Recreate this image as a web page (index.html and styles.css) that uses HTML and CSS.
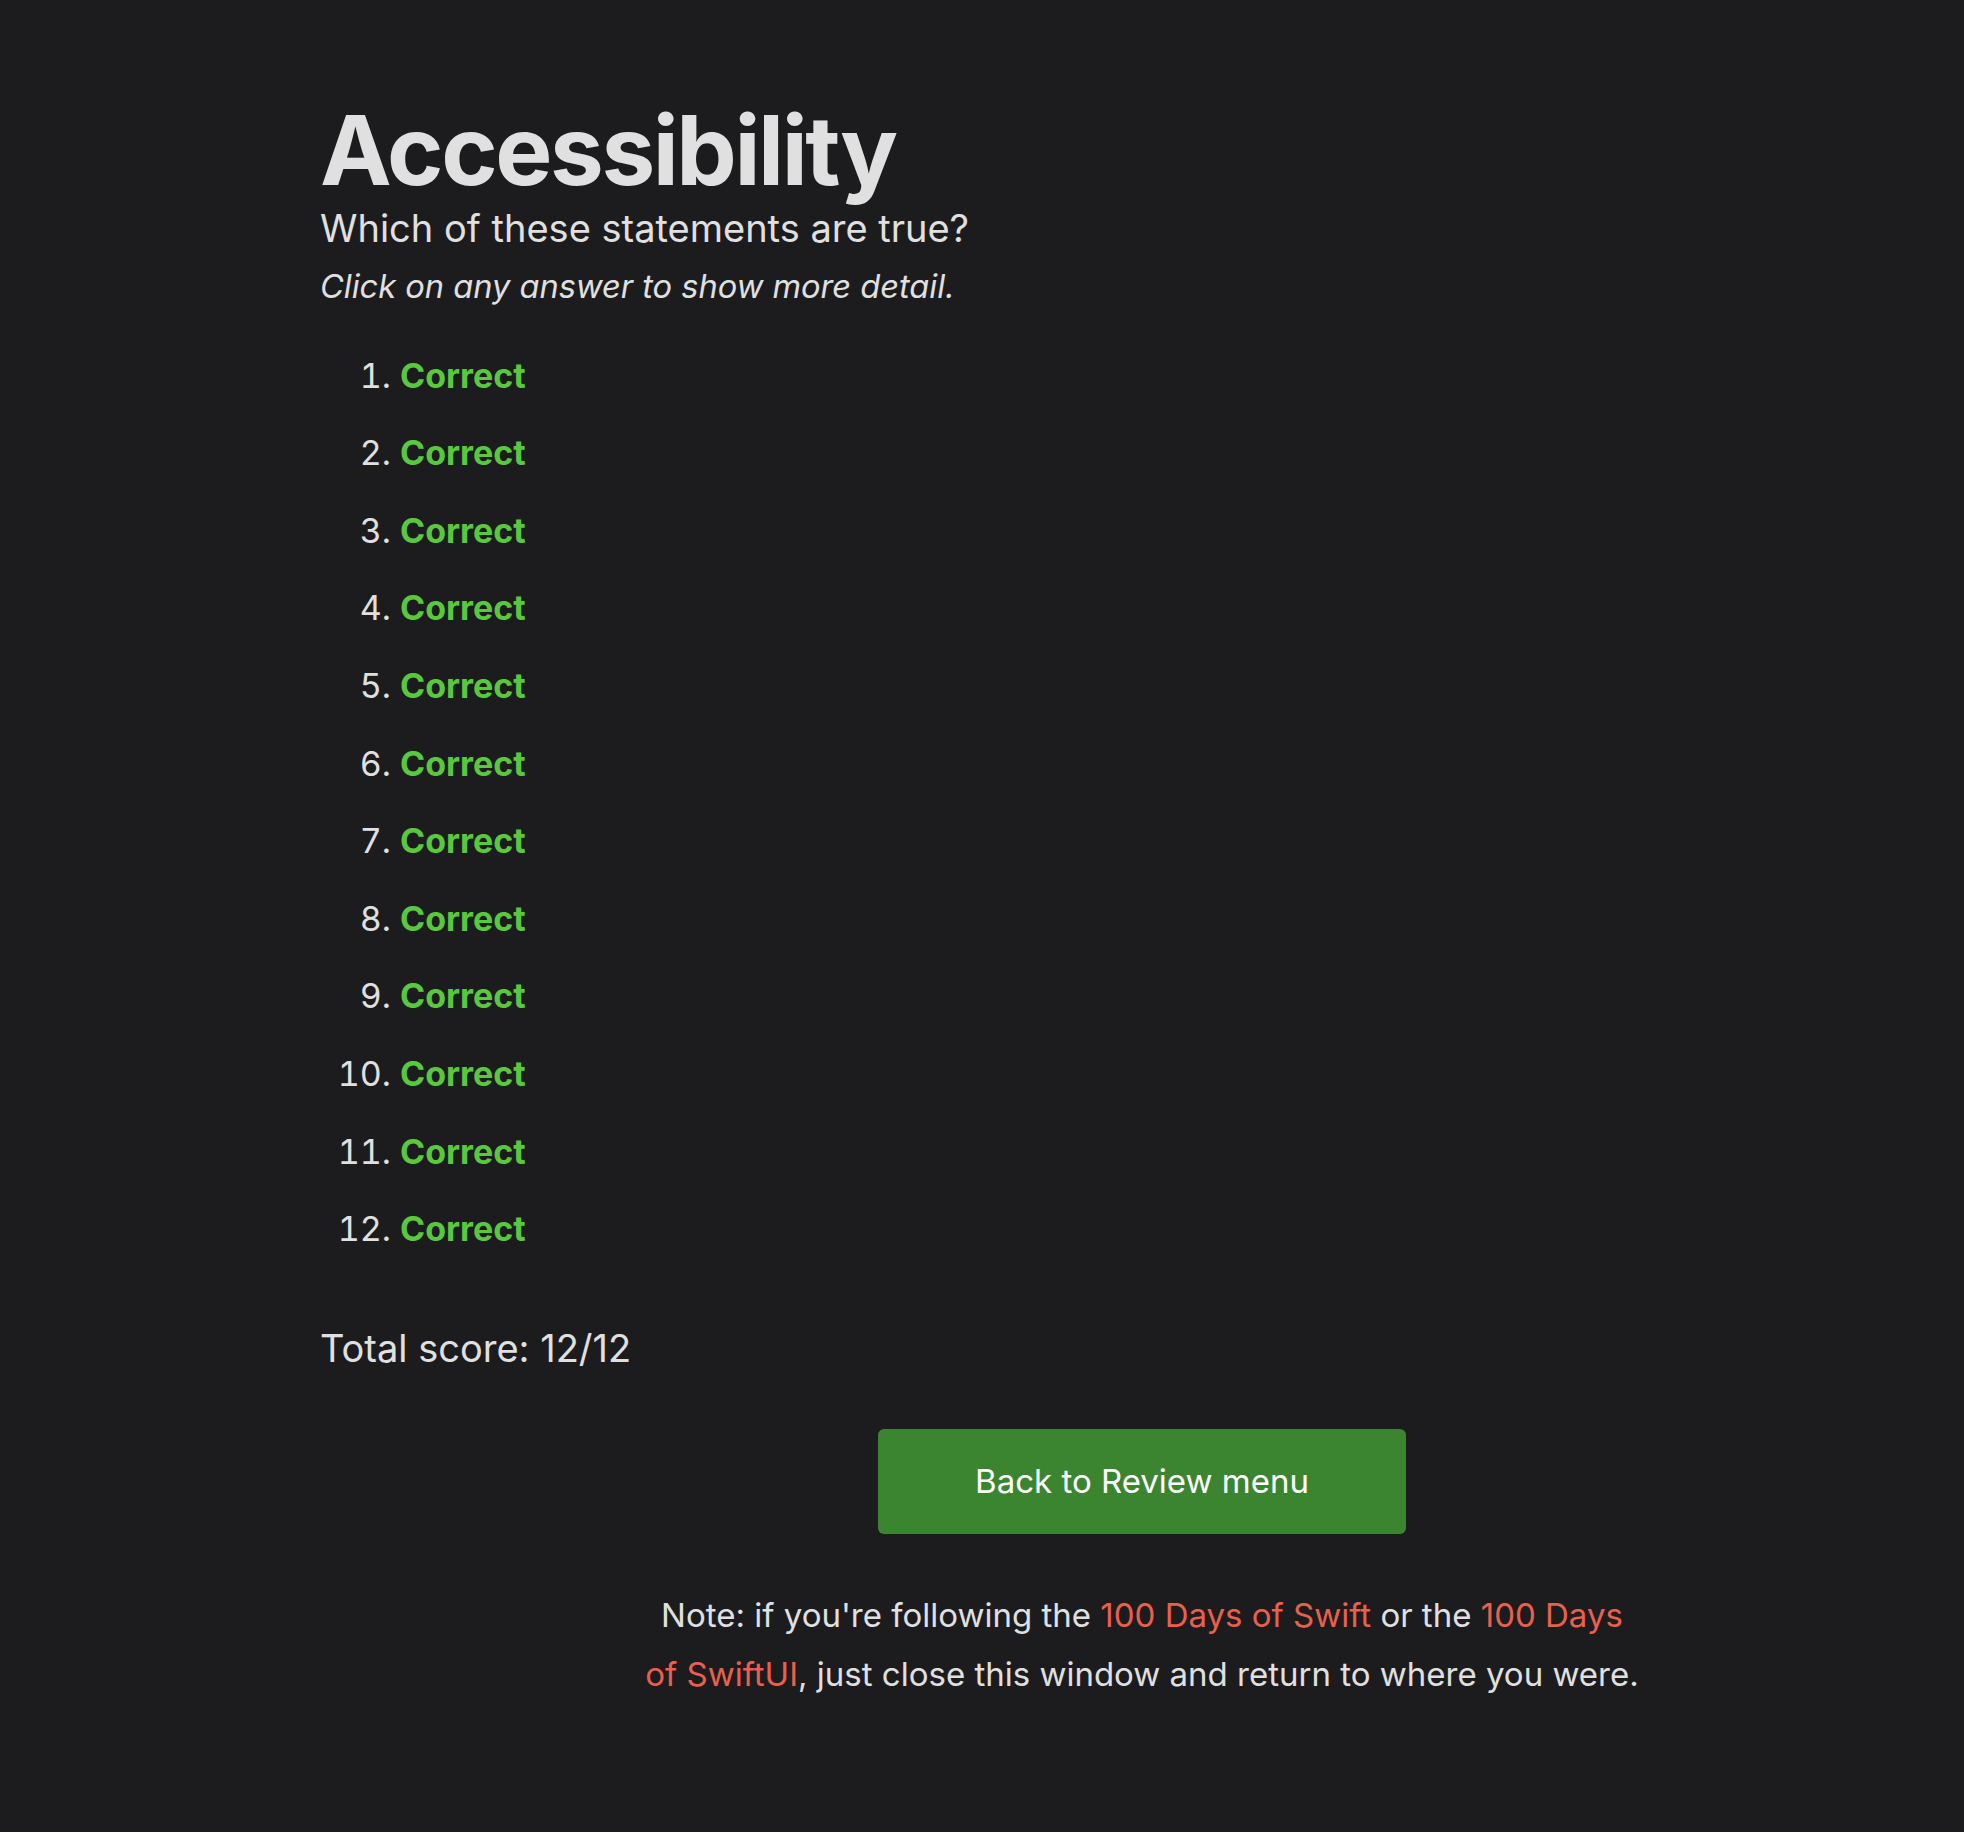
FILE: index.html
```html
<!DOCTYPE html>
<html lang="en">
<head>
<meta charset="utf-8">
<title>Accessibility</title>
<link rel="stylesheet" href="styles.css">
</head>
<body>
<main class="page">
  <h1 class="title">Accessibility</h1>
  <p class="question">Which of these statements are true?</p>
  <p class="hint">Click on any answer to show more detail.</p>
  <ol class="answers">
    <li><span class="correct">Correct</span></li>
    <li><span class="correct">Correct</span></li>
    <li><span class="correct">Correct</span></li>
    <li><span class="correct">Correct</span></li>
    <li><span class="correct">Correct</span></li>
    <li><span class="correct">Correct</span></li>
    <li><span class="correct">Correct</span></li>
    <li><span class="correct">Correct</span></li>
    <li><span class="correct">Correct</span></li>
    <li><span class="correct">Correct</span></li>
    <li><span class="correct">Correct</span></li>
    <li><span class="correct">Correct</span></li>
  </ol>
  <p class="score">Total score: 12/12</p>
  <div class="actions">
    <a class="button" href="#">Back to Review menu</a>
    <p class="note">Note: if you're following the <a href="#">100 Days of Swift</a> or the <a href="#">100 Days of SwiftUI</a>, just close this window and return to where you were.</p>
  </div>
</main>
</body>
</html>
```

FILE: styles.css
```css
html, body {
  margin: 0;
  padding: 0;
  background: #1c1c1e;
}
body {
  color: #e0e0e0;
  font-family: Inter, "Noto Sans", "Liberation Sans", sans-serif;
  font-size: 34px;
}
.page {
  padding: 98px 0 120px 320px;
}
.title {
  margin: 0;
  font-size: 96px;
  font-weight: 700;
  letter-spacing: -2.4px;
  line-height: 1.1;
}
.question {
  margin: 0;
  font-size: 38px;
  line-height: 1.3;
}
.hint {
  margin: 11px 0 0;
  font-size: 32.6px;
  font-style: italic;
  line-height: 1.4;
}
.answers {
  margin: 42px 0 0;
  padding-left: 80px;
  line-height: 1.4;
}
.answers li {
  margin-bottom: 30px;
}
.correct {
  color: #5ac83d;
  font-weight: 700;
}
.score {
  margin: 72px 0 0;
  font-size: 38px;
}
.actions {
  display: flex;
  flex-direction: column;
  align-items: center;
  margin-top: 58px;
}
.button {
  display: block;
  width: 528px;
  height: 105px;
  line-height: 105px;
  text-align: center;
  background: #3c8530;
  color: #ffffff;
  border-radius: 6px;
  text-decoration: none;
  font-size: 33px;
}
.note {
  margin: 52px 0 0;
  max-width: 1000px;
  text-align: center;
  line-height: 59px;
  font-size: 33px;
}
.note a {
  color: #e9604c;
  text-decoration: none;
}
```
